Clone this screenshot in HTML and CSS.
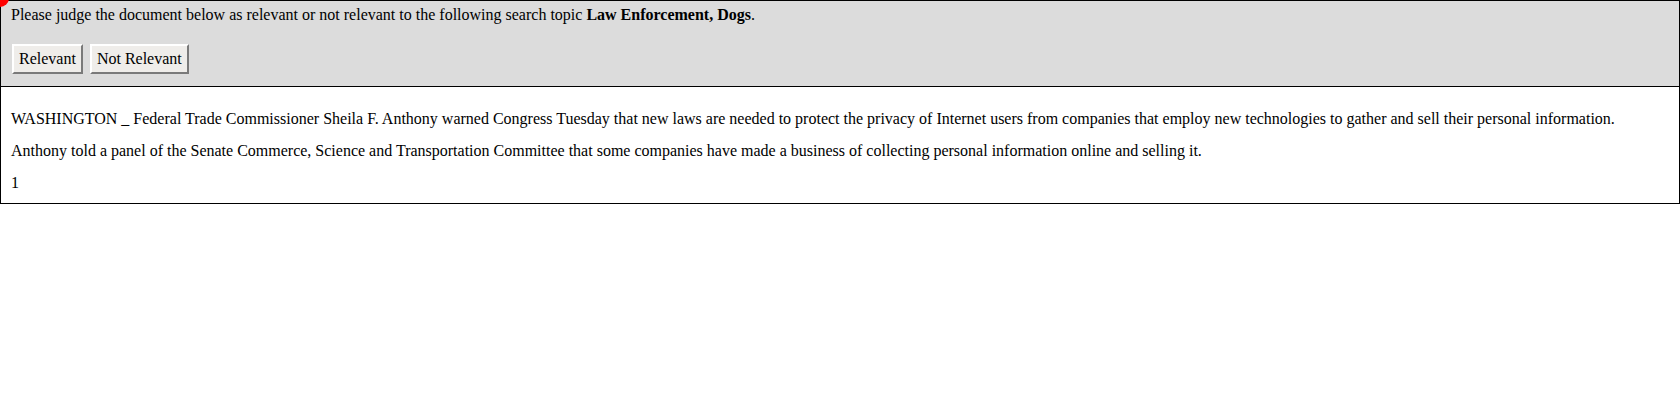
FILE: index.html
```html
<!DOCTYPE html>
<html>
<head>
<meta charset="utf-8">
<link rel="stylesheet" href="styles.css">
</head>
<body>
<div class="marker"></div>
<div class="judge">
  <p class="prompt">Please judge the document below as relevant or not relevant to the following search topic <b>Law Enforcement, Dogs</b>.</p>
  <div class="actions">
    <button class="btn" type="button">Relevant</button>
    <button class="btn" type="button">Not Relevant</button>
  </div>
</div>
<div class="doc">
  <p>WASHINGTON _ Federal Trade Commissioner Sheila F. Anthony warned Congress Tuesday that new laws are needed to protect the privacy of Internet users from companies that employ new technologies to gather and sell their personal information.</p>
  <p>Anthony told a panel of the Senate Commerce, Science and Transportation Committee that some companies have made a business of collecting personal information online and selling it.</p>
  <p>1</p>
</div>
</body>
</html>
```
FILE: styles.css
```css
html, body {
  margin: 0;
  padding: 0;
  background: #ffffff;
}
body {
  font-family: "Liberation Serif", "Times New Roman", serif;
  font-size: 16px;
  color: #000000;
  line-height: 18px;
}
.marker {
  position: absolute;
  left: -9px;
  top: -11px;
  width: 18px;
  height: 18px;
  border-radius: 50%;
  background: #ff0000;
}
.judge {
  background: #dcdcdc;
  border: 1px solid #000000;
  padding: 5px 10px 12px 10px;
}
.prompt {
  margin: 0;
}
.actions {
  display: flex;
  gap: 7px;
  margin-top: 20px;
  padding-left: 1px;
}
.btn {
  font-family: "Liberation Serif", "Times New Roman", serif;
  font-size: 16px;
  line-height: 18px;
  color: #000000;
  background: #efedea;
  border: 2px solid;
  border-color: #ffffff #7a7a7a #7a7a7a #ffffff;
  padding: 4px 5px;
  margin: 0;
  border-radius: 0;
}
.doc {
  border: 1px solid #000000;
  border-top: none;
  padding: 9px 10px 11px 10px;
}
.doc p {
  margin: 14px 0 0 0;
}
```
